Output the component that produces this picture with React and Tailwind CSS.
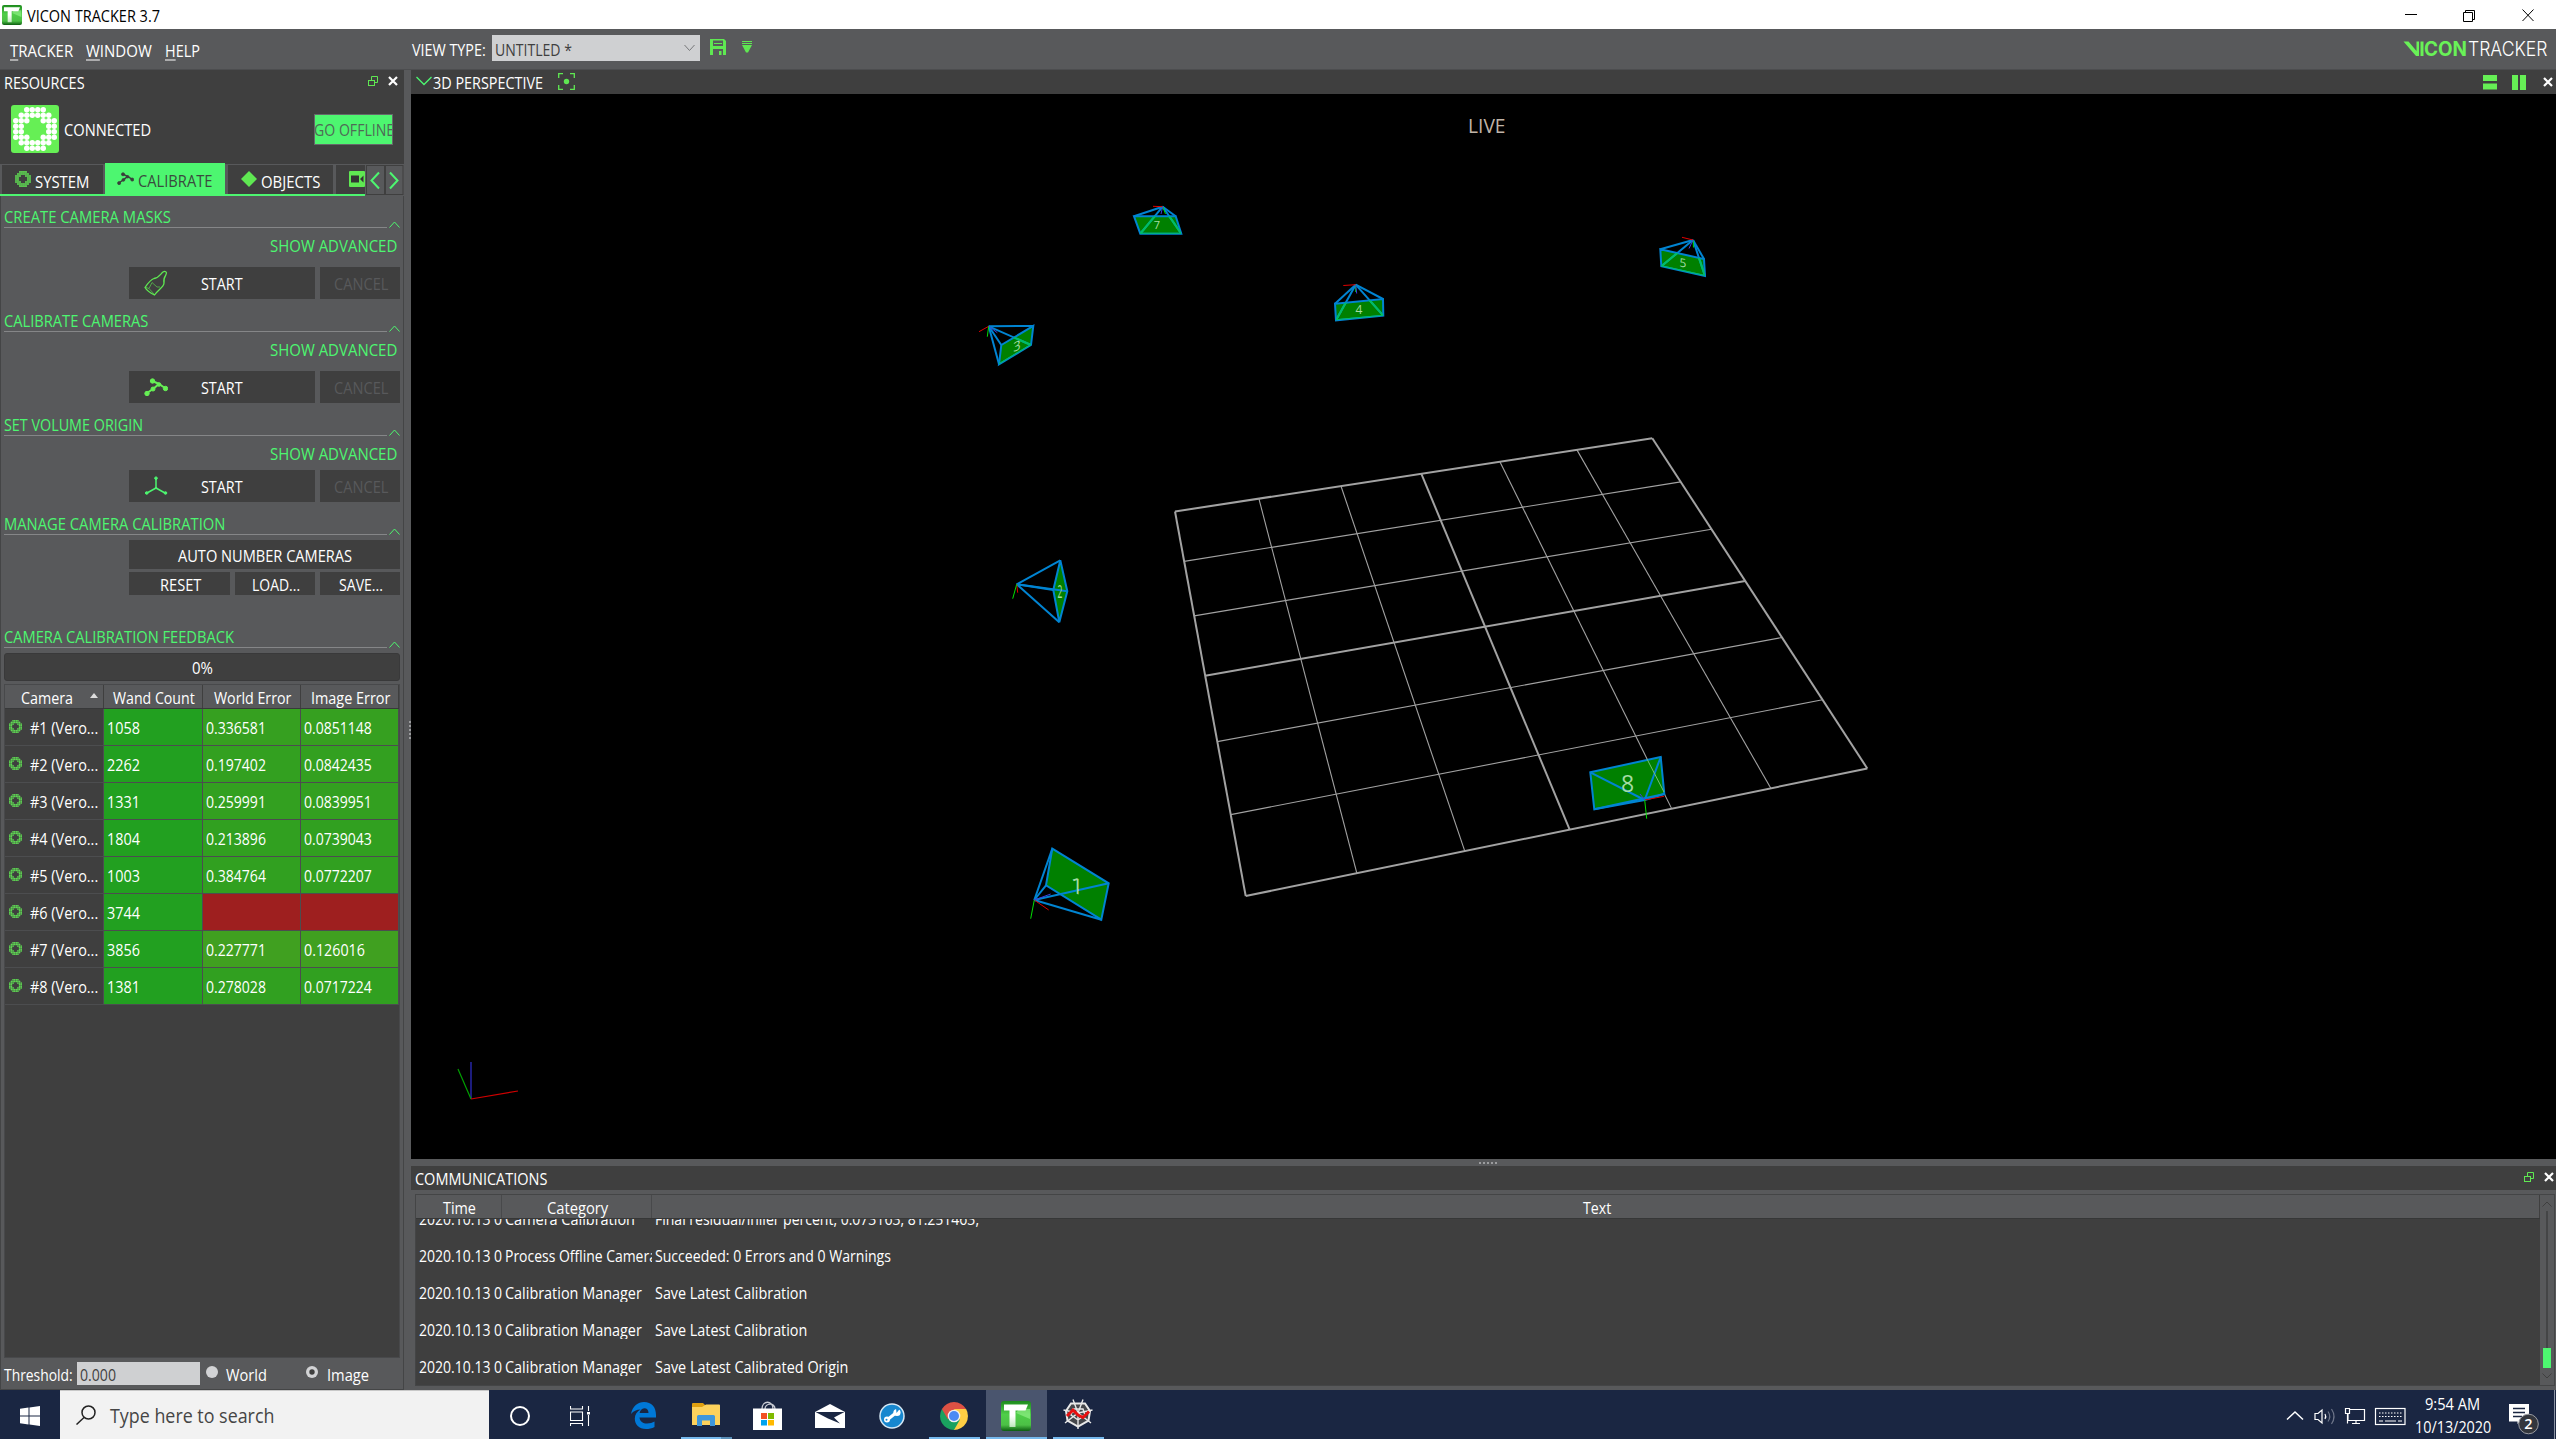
import React, { useLayoutEffect, useRef, useState } from "react";

/* Text run condensed horizontally so that its glyphs span w pixels. */
function T({ w, className = "", children }) {
  const ref = useRef(null);
  const [k, setK] = useState(null);
  useLayoutEffect(() => {
    if (!ref.current) return;
    setK((w + 1) / ref.current.offsetWidth);
  }, [w]);
  return (
    <span className={"inline-block shrink-0 whitespace-pre " + className} style={{ width: w + "px" }}>
      <span
        ref={ref}
        className="inline-block origin-left"
        style={k === null ? undefined : { transform: `translateY(0.5px) scaleX(${k})` }}
      >
        {children}
      </span>
    </span>
  );
}

const RING = [
  [2, 3, 4, 5],
  [1, 2, 3, 4, 5, 6],
  [0, 1, 2, 5, 6, 7],
  [0, 1, 6, 7],
  [0, 1, 6, 7],
  [0, 1, 2, 5, 6, 7],
  [1, 2, 3, 4, 5, 6],
  [2, 3, 4, 5],
];

function DotRing({ className, fill, r = 0.5 }) {
  return (
    <svg viewBox="0 0 8 8" className={className}>
      {RING.map((cols, y) =>
        cols.map((x) => <circle key={x + "-" + y} cx={x + 0.5} cy={y + 0.5} r={r} fill={fill} />)
      )}
    </svg>
  );
}

function TrackerLogo({ className }) {
  return (
    <svg viewBox="0 0 30 30" className={className}>
      <defs>
        <linearGradient id="tg" x1="0" y1="0" x2="0" y2="1">
          <stop offset="0" stopColor="#1d8a1d" />
          <stop offset="0.45" stopColor="#4fce49" />
          <stop offset="0.8" stopColor="#4cc046" />
          <stop offset="1" stopColor="#0c5c10" />
        </linearGradient>
        <linearGradient id="tw" x1="0" y1="0" x2="0" y2="1">
          <stop offset="0.5" stopColor="#fff" />
          <stop offset="1" stopColor="#fff" stopOpacity="0.65" />
        </linearGradient>
      </defs>
      <rect width="30" height="30" rx="3" fill="url(#tg)" />
      <path d="M15 12L29 18V8H18Z" fill="#9af58f" opacity="0.6" />
      <path d="M3 3.500H27L24.500 9.500H14.500V26H8.500V9.500H3Z" fill="url(#tw)" />
    </svg>
  );
}

function FloatIcon() {
  return (
    <svg viewBox="0 0 10 10" className="size-[10px] shrink-0" fill="none" stroke="#5fe852">
      <path d="M3.5 4V0.5H9.5V6.500H7" />
      <rect x="0.5" y="4.500" width="6" height="5" />
    </svg>
  );
}

function CloseIcon() {
  return (
    <svg viewBox="0 0 10 10" className="size-[10px] shrink-0" stroke="#fff" strokeWidth="2.2">
      <path d="M1 1L9 9M9 1L1 9" />
    </svg>
  );
}

function WandIcon({ className, color }) {
  return (
    <svg viewBox="0 0 24 18" className={className} fill={color} stroke={color}>
      <path d="M3 15L9 11L15 6L21 10M15 6L8.500 3" fill="none" strokeWidth="2" />
      <circle cx="3" cy="15.500" r="2.200" />
      <circle cx="9" cy="11" r="2" />
      <circle cx="15" cy="6.500" r="1.800" />
      <circle cx="21.500" cy="10.500" r="2.200" />
      <circle cx="8.500" cy="3" r="2.200" />
    </svg>
  );
}

function BrushIcon() {
  return (
    <svg viewBox="0 0 24 26" className="h-[26px] w-6" fill="none" stroke="#5fe852" strokeWidth="1.300">
      <path d="M19 2C21 0.500 23.500 2 22 4.500C20 8 19.500 9 20 13C20 17 14 20 10.500 25C6.500 23 2.500 20 1 17.500C4 13 6.500 9.500 10 8.500C15 8 16.500 4 19 2Z" />
      <path d="M1 17L5 18.500L8 12.500L13 17L16 17M5 18.500L10 24" strokeWidth="0.600" />
    </svg>
  );
}

function OriginIcon() {
  return (
    <svg viewBox="0 0 24 20" className="h-5 w-6" fill="#4df670" stroke="#4df670">
      <path d="M12 2V12L3 17M12 12L21 17" fill="none" strokeWidth="1.500" />
      <circle cx="12" cy="2.200" r="1.300" />
      <circle cx="2.700" cy="17" r="1.300" />
      <circle cx="21.500" cy="17" r="1.300" />
      <circle cx="12" cy="12" r="0.800" />
    </svg>
  );
}

function TitleBar() {
  return (
    <div className="flex h-[29px] items-center bg-white pl-0.5 text-black">
      <TrackerLogo className="mr-[5px] size-5" />
      <T w={132}>VICON TRACKER 3.7</T>
      <svg viewBox="0 0 130 14" className="mr-[22px] ml-auto h-[14px] w-[130px]" fill="none" stroke="#000">
        <path d="M1 6.500H13M59.500 4.500H68.500V13.500H59.500ZM61.500 4.500V2.500H70.500V11.500H68.500M118.500 1.500L129.500 13M129.500 1.500L118.500 13" />
      </svg>
    </div>
  );
}

function MenuBar() {
  return (
    <div className="flex h-[41px] items-center border-b border-[#4c4d4f] bg-[#58595b] pl-2.5">
      <T w={62} className="mt-0.5"><u className="underline underline-offset-[3px]">T</u>RACKER</T>
      <T w={65} className="mt-0.5 ml-[14px]"><u className="underline underline-offset-[3px]">W</u>INDOW</T>
      <T w={34} className="mt-0.5 ml-[14px]"><u className="underline underline-offset-[3px]">H</u>ELP</T>
      <T w={73} className="ml-[213px]">VIEW TYPE:</T>
      <div className="mb-0.5 ml-[7px] flex h-[26px] w-[208px] items-center justify-between bg-[#cfd0d2] pr-[5px] pl-[3px] text-[#3f3f3f]">
        <T w={76} className="mt-px">UNTITLED *</T>
        <svg viewBox="0 0 11 8" className="h-2 w-[11px]" fill="none" stroke="#77787a"><path d="M0.500 1L5.500 6.500L10.500 1" /></svg>
      </div>
      <svg viewBox="0 0 16 16" className="mb-1 ml-[10px] size-4">
        <path d="M0 0H14L16 2V16H0Z" fill="#5fe852" />
        <path d="M3 1.500H13V7H3ZM3 10H13V16H3Z" fill="#58595b" />
        <path d="M4 4.500H12M2 8.500H14" stroke="#5fe852" strokeWidth="1.200" />
        <rect x="9" y="12" width="2.500" height="4" fill="#5fe852" />
      </svg>
      <svg viewBox="0 0 10 12" className="mb-1 ml-4 h-3 w-2.5">
        <path d="M0 0.500H10M0 2.500H10" stroke="#5fe852" />
        <path d="M0 4H10L6 11.500H4Z" fill="#5fe852" />
      </svg>
      <svg viewBox="0 0 144 16" className="mr-[8px] mb-px ml-auto h-4 w-[144px] overflow-visible">
        <path d="M-0.500 0.500H4.500L12.500 10V0.500H15V15H12Z" fill="#69f257" />
        <rect x="16.500" y="0.500" width="3" height="14.500" fill="#69f257" />
        <text x="20" y="15" textLength="43" lengthAdjust="spacingAndGlyphs" fontFamily="Inter" fontSize="19.500" fontWeight="700" fill="#69f257">CON</text>
        <text x="64" y="15" textLength="79.500" lengthAdjust="spacingAndGlyphs" fontFamily="Inter" fontSize="19.500" fontWeight="300" fill="#fff">TRACKER</text>
      </svg>
    </div>
  );
}

function ResourcesHeader() {
  return (
    <div className="h-[94px] bg-[#3f3f3f]">
      <div className="flex h-[25px] items-center pb-px pl-1">
        <T w={80}>RESOURCES</T>
        <div className="mr-1.5 mb-0.5 ml-auto flex gap-2.5"><FloatIcon /><CloseIcon /></div>
      </div>
      <div className="mt-[10px] flex h-12 items-center pr-[11px] pl-[11px]">
        <div className="flex size-12 items-center justify-center rounded-[3px] bg-[#66ef55]">
          <DotRing className="size-11" fill="#fff" />
        </div>
        <T w={86} className="ml-[5px]">CONNECTED</T>
        <div className="ml-auto flex h-[31px] w-[79px] items-center justify-center overflow-hidden border border-[#66686a] bg-[#4df670] text-[#4f6a56]">
          <T w={79}>GO OFFLINE</T>
        </div>
      </div>
    </div>
  );
}

function Tabs() {
  return (
    <div className="relative flex h-8 items-stretch bg-[#58595b]">
      <div className="flex w-[365px] items-end border-b-2 border-[#4df670] pl-0.5">
        <div className="flex h-[29px] w-[101px] items-center bg-[#3f3f3f] pl-[13px]">
          <DotRing className="mb-0.5 size-4" fill="#5fd653" r={0.52} /><T w={53} className="mt-0.5 ml-1">SYSTEM</T>
        </div>
        <div className="ml-[2px] flex h-[31px] w-[120px] items-center bg-[#4df670] pl-[12px] text-[#3a4a3e]">
          <WandIcon className="h-[13px] w-[17px]" color="#3a3f3b" /><T w={73} className="mt-0.5 ml-1">CALIBRATE</T>
        </div>
        <div className="ml-[3px] flex h-[29px] w-[105px] items-center bg-[#3f3f3f] pl-[13px]">
          <svg viewBox="0 0 16 16" className="mb-0.5 size-4"><path d="M8 0L16 8L8 16L0 8Z" fill="#5fe852" /></svg>
          <T w={58} className="mt-0.5 ml-1">OBJECTS</T>
        </div>
        <div className="ml-[3px] flex h-[29px] flex-1 items-center justify-end bg-[#3f3f3f]">
          <svg viewBox="0 0 16 16" className="mb-0.5 size-4"><rect width="16" height="16" rx="1" fill="#5fe852" /><path d="M2 4.500H10V11.500H2ZM11 8L14.500 4.500V11.500Z" fill="#333" /></svg>
        </div>
      </div>
      <svg viewBox="0 0 39 32" className="h-8 w-[39px]" fill="none">
        <rect x="1.500" y="1.500" width="18" height="29" stroke="#3f3f3f" />
        <rect x="20.500" y="1.500" width="17.500" height="29" stroke="#3f3f3f" />
        <path d="M14 8.500L6.500 16.500L14 24.500M25 8.500L32.500 16.500L25 24.500" stroke="#4df670" strokeWidth="2" />
      </svg>
    </div>
  );
}

function Section({ title, w, className }) {
  return (
    <div className={"flex items-end " + className}>
      <div className="h-[23px] w-[383px] border-b border-[#858688] leading-[22px] text-[#4df670]"><T w={w}>{title}</T></div>
      <svg viewBox="0 0 11 7" className="ml-0.5 h-[7px] w-[11px]" fill="none" stroke="#4df670"><path d="M0.500 6.500L5.500 1L10.500 6.500" /></svg>
    </div>
  );
}

function Advanced({ className }) {
  return <div className={"flex justify-end pr-1 pb-0.5 leading-[18px] text-[#4df670] " + className}><T w={126}>SHOW ADVANCED</T></div>;
}

function StartRow({ icon, className }) {
  return (
    <div className={"flex justify-end gap-[5px] " + className}>
      <div className="flex h-8 w-[186px] items-center bg-[#3f3f3f] pl-[15px]">
        <div className="flex w-[57px]">{icon}</div>
        <T w={41}>START</T>
      </div>
      <div className="flex h-8 w-20 items-center justify-center bg-[#3f3f3f] text-[#58595b]"><T w={53}>CANCEL</T></div>
    </div>
  );
}

const G = "bg-[#22a020]";
const ROWS = [
  ["#1 (Vero...", "1058", "0.336581", "0.0851148", "bg-[#36a020]"],
  ["#2 (Vero...", "2262", "0.197402", "0.0842435", "bg-[#33a020]"],
  ["#3 (Vero...", "1331", "0.259991", "0.0839951", "bg-[#33a020]"],
  ["#4 (Vero...", "1804", "0.213896", "0.0739043", "bg-[#31a020]"],
  ["#5 (Vero...", "1003", "0.384764", "0.0772207", "bg-[#31a020]"],
  ["#6 (Vero...", "3744", "", "", "bg-[#9e1f1f]"],
  ["#7 (Vero...", "3856", "0.227771", "0.126016", "bg-[#40a020]"],
  ["#8 (Vero...", "1381", "0.278028", "0.0717224", "bg-[#31a020]"],
];

function CameraTable() {
  const cell = "flex h-[37px] items-center border-r border-b border-[#4c4d4f] pl-[3px] ";
  return (
    <div className="mt-[3px] h-[674px] w-[396px] border border-[#48494b] bg-[#3f3f3f]">
      <div className="grid h-6 grid-cols-[99px_99px_98px_98px] border-b border-[#38393a] bg-[#58595b]">
        <div className="flex items-center border-r border-[#3f3f3f] pl-4">
          <T w={51}>Camera</T>
          <svg viewBox="0 0 8 5" className="mb-0.5 ml-[18px] h-[5px] w-2"><path d="M0 5L4 0L8 5Z" fill="#ddd" /></svg>
        </div>
        <div className="flex items-center justify-center border-r border-[#3f3f3f]"><T w={81}>Wand Count</T></div>
        <div className="flex items-center justify-center border-r border-[#3f3f3f]"><T w={76}>World Error</T></div>
        <div className="flex items-center justify-center border-r border-[#3f3f3f]"><T w={78}>Image Error</T></div>
      </div>
      {ROWS.map(([n, a, b, c, bg]) => (
        <div key={n} className="grid grid-cols-[99px_99px_98px_98px]">
          <div className={cell}>
            <DotRing className="mb-0.5 ml-px size-[13px]" fill="#5fd653" r={0.52} /><T w={67} className="ml-2">{n}</T>
          </div>
          <div className={cell + G}><T w={32}>{a}</T></div>
          <div className={cell + bg}>{b && <T w={59}>{b}</T>}</div>
          <div className={cell + bg}>{c && <T w={c.length > 8 ? 67 : 60}>{c}</T>}</div>
        </div>
      ))}
    </div>
  );
}

function Radio({ on }) {
  return (
    <svg viewBox="0 0 14 14" className="size-[14px]"><circle cx="7" cy="7" r="6" fill="#d2d3d5" />{on && <circle cx="7" cy="7" r="2.700" fill="#3f3f3f" />}</svg>
  );
}

const BTN = "flex items-center justify-center bg-[#3f3f3f] ";

function LeftPanel() {
  return (
    <div className="flex w-[404px] flex-col">
      <ResourcesHeader />
      <Tabs />
      <div className="h-[1194px] border-x border-b border-[#444546] pt-[9px] pr-[3px] pl-[3px]">
        <Section title="CREATE CAMERA MASKS" w={166} />
        <Advanced className="mt-2" />
        <StartRow className="mt-[11px]" icon={<BrushIcon />} />
        <Section title="CALIBRATE CAMERAS" w={143} className="mt-2.5" />
        <Advanced className="mt-2" />
        <StartRow className="mt-[11px]" icon={<WandIcon className="h-[18px] w-6" color="#66ef55" />} />
        <Section title="SET VOLUME ORIGIN" w={138} className="mt-2.5" />
        <Advanced className="mt-2" />
        <StartRow className="mt-1.5" icon={<OriginIcon />} />
        <Section title="MANAGE CAMERA CALIBRATION" w={220} className="mt-[10px]" />
        <div className="mt-[5px] flex justify-end"><div className={BTN + "h-[29px] w-[271px]"}><T w={173}>AUTO NUMBER CAMERAS</T></div></div>
        <div className="mt-[3px] flex h-[23px] justify-end gap-[5px]">
          <div className={BTN + "w-[101px]"}><T w={40}>RESET</T></div>
          <div className={BTN + "w-20"}><T w={47}>LOAD...</T></div>
          <div className={BTN + "w-20"}><T w={43}>SAVE...</T></div>
        </div>
        <Section title="CAMERA CALIBRATION FEEDBACK" w={229} className="mt-[30px]" />
        <div className={BTN + "mt-[5px] h-7 w-[396px] rounded-[3px] border border-[#39393a]"}><T w={20}>0%</T></div>
        <CameraTable />
        <div className="flex h-[31px] items-center">
          <T w={68}>Threshold:</T>
          <div className="ml-[5px] flex h-[23px] w-[123px] items-center bg-[#cfd0d2] pl-[3px] text-[#3f3f3f]"><T w={35}>0.000</T></div>
          <div className="mb-1 ml-[5px]"><Radio /></div>
          <T w={40} className="ml-[7px]">World</T>
          <div className="mb-1 ml-[39px]"><Radio on /></div>
          <T w={41} className="ml-2">Image</T>
        </div>
      </div>
    </div>
  );
}

/* Projects the unit square onto the floor quad (tl, tr, br, bl). */
function projector([[x0, y0], [x1, y1], [x2, y2], [x3, y3]]) {
  const sx = x0 - x1 + x2 - x3, sy = y0 - y1 + y2 - y3;
  const dx1 = x1 - x2, dx2 = x3 - x2, dy1 = y1 - y2, dy2 = y3 - y2;
  const det = dx1 * dy2 - dx2 * dy1;
  const g = (sx * dy2 - dx2 * sy) / det, h = (dx1 * sy - sx * dy1) / det;
  return (u, v) => {
    const d = g * u + h * v + 1;
    return [
      ((x1 - x0 + g * x1) * u + (x3 - x0 + h * x3) * v + x0) / d,
      ((y1 - y0 + g * y1) * u + (y3 - y0 + h * y3) * v + y0) / d,
    ];
  };
}

const project = projector([[1175, 511.500], [1652.300, 438.300], [1867.300, 768.500], [1245.700, 896]]);
const STEPS = [0, 1, 2, 3, 4, 5, 6];

const CAMERAS = [
  { n: "7", apex: [1162.7, 206.7], q: [[1134, 216.3], [1175.7, 216.3], [1181.3, 233.7], [1140.3, 233.7]], red: [1153, 206.3], green: [1165.5, 214], vio: [1161, 214], t: [1157, 229, 11] },
  { n: "4", apex: [1355.7, 284.7], q: [[1335, 303.7], [1383, 299], [1383.3, 315.7], [1336, 320.3]], red: [1343.3, 285.5], green: [1355.7, 292], vio: [1356.7, 293.5], t: [1359, 314, 12] },
  { n: "3", apex: [988.7, 326.3], q: [[1001.3, 345], [1033.3, 326], [1031, 345], [999, 364.3]], red: [979, 331.7], green: [987.3, 336.7], vio: [997.3, 332.7], t: [1017, 350.5, 13], skew: -25 },
  { n: "5", apex: [1693, 240], q: [[1660.3, 249.3], [1704, 259], [1705, 276], [1661.3, 266.3]], red: [1682, 237.3], green: [1693.5, 247.5], vio: [1689, 248.5], t: [1683, 267, 12], skew: 10 },
  { n: "1", apex: [1034.3, 900], q: [[1052.3, 848.7], [1108.7, 883.3], [1101.3, 919.7], [1046, 885.3]], red: [1048.7, 910], green: [1030.7, 918.7], vio: [1050.7, 894], t: [1077, 894, 22], front: true, skew: 25 },
  { n: "8", apex: [1644.7, 800], q: [[1590.3, 772.3], [1660.7, 757], [1664.3, 794], [1594.3, 809.3]], red: [1664, 796.3], green: [1646.7, 818.7], vio: [1640, 794], t: [1627.5, 791.5, 23], front: true },
  { n: "2", apex: [1016.7, 584.3], q: [[1060.3, 560.3], [1067.3, 591.3], [1059.3, 622.3], [1053.3, 590]], red: [1017.7, 592.7], green: [1012.7, 598.7], t: [1060, 598, 19], narrow: true, front: true },
];

const pts = (a) => a.map((p) => p.join(",")).join(" ");

function Camera({ c }) {
  return (
    <g fill="none" strokeWidth="2" stroke="#0084d2">
      <polygon points={pts(c.q)} fill="#008000" />
      {c.q.map((p, i) => (
        <line key={i} x1={c.apex[0]} y1={c.apex[1]} x2={p[0]} y2={p[1]} />
      ))}
      {!c.front && (
        <>
          <clipPath id={"cam" + c.n}><polygon points={pts(c.q)} /></clipPath>
          <g clipPath={"url(#cam" + c.n + ")"} stroke="#00c064">
            {c.q.map((p, i) => i < 2 ? null : <line key={i} x1={c.apex[0]} y1={c.apex[1]} x2={p[0]} y2={p[1]} />)}
            <line x1={c.q[3][0]} y1={c.q[3][1]} x2={c.q[2][0]} y2={c.q[2][1]} />
          </g>
        </>
      )}
      <g strokeWidth="1">
        <line x1={c.apex[0]} y1={c.apex[1]} x2={c.red[0]} y2={c.red[1]} stroke="#e00000" />
        <line x1={c.apex[0]} y1={c.apex[1]} x2={c.green[0]} y2={c.green[1]} stroke="#00e000" />
        {c.vio && <line x1={c.apex[0]} y1={c.apex[1]} x2={c.vio[0]} y2={c.vio[1]} stroke="#4040e0" />}
      </g>
      <text
        transform={`translate(${c.t[0]} ${c.t[1]}) skewY(${c.skew || 0}) scale(${c.narrow ? 0.45 : 1} 1)`}
        fontSize={c.t[2]}
        fontWeight="400"
        fill="#a4dca4"
        stroke="none"
        textAnchor="middle"
        fontFamily="Open Sans"
      >
        {c.n}
      </text>
    </g>
  );
}

function Scene() {
  return (
    <svg viewBox="411 94 2145 1065" className="block h-[1065px] w-[2145px] bg-black">
      <text x="1468" y="133" textLength="37.500" lengthAdjust="spacingAndGlyphs" fontSize="20" fill="#c0b4a8" fontFamily="Open Sans">LIVE</text>
      <g stroke="#a2a2a2">
        {STEPS.map((i) => {
          const a = project(i / 6, 0), b = project(i / 6, 1), c = project(0, i / 6), d = project(1, i / 6);
          const sw = i % 3 === 0 ? 2 : 1.1;
          return (
            <g key={i} strokeWidth={sw}>
              <line x1={a[0]} y1={a[1]} x2={b[0]} y2={b[1]} />
              <line x1={c[0]} y1={c[1]} x2={d[0]} y2={d[1]} />
            </g>
          );
        })}
      </g>
      {CAMERAS.map((c) => <Camera key={c.n} c={c} />)}
      <line x1="1647" y1="759" x2="1664" y2="792" stroke="#74c074" />
      <g strokeWidth="1.200">
        <line x1="471" y1="1099" x2="471" y2="1062" stroke="#3030d0" />
        <line x1="471" y1="1099" x2="458" y2="1069" stroke="#00a000" />
        <line x1="471" y1="1099" x2="518" y2="1091" stroke="#d00000" />
      </g>
    </svg>
  );
}

function ViewHeader() {
  return (
    <div className="flex h-6 items-center bg-[#3f3f3f] pr-[3px] pl-[5px]">
      <svg viewBox="0 0 16 10" className="mb-0.5 h-2.5 w-4" fill="none" stroke="#4df670" strokeWidth="1.300"><path d="M0.500 1L8 8.500L15.500 1" /></svg>
      <T w={109} className="ml-px">3D PERSPECTIVE</T>
      <svg viewBox="0 0 17 17" className="mb-0.5 ml-[16px] size-[17px]" fill="none" stroke="#5fe852" strokeWidth="1.300">
        <path d="M0.700 5V0.700H5M12 0.700H16.300V5M16.300 12V16.300H12M5 16.300H0.700V12" /><circle cx="8.500" cy="8.500" r="2.700" fill="#5fe852" stroke="none" />
      </svg>
      <svg viewBox="0 0 43 15" className="mr-[17px] ml-auto h-[15px] w-[43px]" fill="#66ef55">
        <path d="M0 0H14V6H0ZM0 8.500H14V14.500H0ZM29 0H35V15H29ZM37 0H43V15H37Z" />
      </svg>
      <CloseIcon />
    </div>
  );
}

const LOG = [
  ["Camera Calibration", 129, "Final residual/inlier percent, 0.073163, 81.251463,", 323],
  ["Process Offline Camera", 151, "Succeeded: 0 Errors and 0 Warnings", 235],
  ["Calibration Manager", 136, "Save Latest Calibration", 151],
  ["Calibration Manager", 136, "Save Latest Calibration", 151],
  ["Calibration Manager", 136, "Save Latest Calibrated Origin", 192],
];

function Communications() {
  return (
    <div className="h-[224px]">
      <div className="flex h-6 items-center bg-[#3f3f3f] pr-0.5 pl-1">
        <T w={131}>COMMUNICATIONS</T>
        <div className="ml-auto flex gap-2.5 pb-0.5"><FloatIcon /><CloseIcon /></div>
      </div>
      <div className="mx-[1px] mt-1 ml-1 flex h-[192px] border border-[#444546] bg-[#3f3f3f]">
        <div className="flex flex-1 flex-col">
          <div className="grid h-6 shrink-0 grid-cols-[86px_150px_1fr] border-b border-[#363737] bg-[#58595b]">
            <div className="flex items-center justify-center border-r border-[#48494b] pt-px"><T w={32}>Time</T></div>
            <div className="flex items-center justify-center border-r border-[#48494b] pt-px"><T w={60}>Category</T></div>
            <div className="flex items-center justify-center border-r border-[#3f3f3f] pt-px pl-px"><T w={27}>Text</T></div>
          </div>
          <div className="flex h-[166px] flex-col justify-end overflow-hidden pb-px">
            {LOG.map((r, i) => (
              <div key={i} className="grid h-[37px] shrink-0 grid-cols-[86px_150px_1fr] items-center">
                <div className="overflow-hidden pl-[3px]"><T w={82} className="align-top">2020.10.13 0</T></div>
                <div className="overflow-hidden pl-[3px]"><T w={r[1]} className="align-top">{r[0]}</T></div>
                <div className="pl-[3px]"><T w={r[3]} className="align-top">{r[2]}</T></div>
              </div>
            ))}
          </div>
        </div>
        <div className="flex w-[14px] flex-col items-center bg-[#58595b] py-1.5">
          <svg viewBox="0 0 10 6" className="h-1.5 w-2.5" fill="none" stroke="#3f3f3f"><path d="M0.500 5.500L5 1L9.500 5.500" /></svg>
          <div className="mt-1 h-[137px] w-0.5 bg-[#444546]" />
          <div className="mb-auto h-5 w-2 bg-[#4df670]" />
          <svg viewBox="0 0 10 6" className="h-1.5 w-2.5" fill="none" stroke="#3f3f3f"><path d="M0.500 0.500L5 5L9.500 0.500" /></svg>
        </div>
      </div>
    </div>
  );
}

function TaskItem({ className = "", under = "", children }) {
  return <div className={"relative flex h-full items-center justify-center pt-0.5 " + className}>{children}{under && <div className={"absolute bottom-0 h-0.5 bg-[#76b9ed] " + under} />}</div>;
}

function Taskbar() {
  return (
    <div className="flex h-[49px] items-center bg-[#1a2642]">
      <TaskItem className="w-[60px]">
        <svg viewBox="0 0 20 20" className="size-5" fill="#fff"><path d="M0 2.800L8.500 1.600V9.500H0ZM9.500 1.500L20 0V9.500H9.500ZM0 10.500H8.500V18.400L0 17.200ZM9.500 10.500H20V20L9.500 18.500Z" /></svg>
      </TaskItem>
      <div className="flex h-full w-[429px] items-center border-t border-[#c8c8c8] bg-[#f2f2f2] pl-4 text-[19.5px] text-[#454545]">
        <svg viewBox="0 0 20 20" className="size-5" fill="none" stroke="#222" strokeWidth="1.500"><circle cx="12.500" cy="7.500" r="6.500" /><path d="M8 12.500L0.500 19.500" /></svg>
        <T w={163} className="ml-[14px]">Type here to search</T>
      </div>
      <TaskItem className="w-[61px]"><div className="size-5 rounded-full border-[2.5px] border-white" /></TaskItem>
      <TaskItem className="w-[61px] pr-px">
        <svg viewBox="0 0 20 20" className="size-5" fill="none" stroke="#fff" strokeWidth="1.100"><path d="M0.500 0V3H12.500V0M0.500 6H12.500V14.500H0.500ZM0.500 20V17.500H12.500V20M18.500 0V5M18.500 9V20" /><rect x="17" y="6" width="3" height="2.500" fill="#fff" stroke="none" /></svg>
      </TaskItem>
      <TaskItem className="w-[62px] pl-[3px]">
        <svg viewBox="0 0 25 27" className="h-[27px] w-[25px]"><path d="M0 12C1.500 4 7 0 13 0C20.500 0 25 5 25 13V15.500H8.500C9 19.500 12 21.500 16 21.500C19 21.500 21.500 20.800 23.500 19.500V25C21 26.500 18 27 15 27C8 27 3.800 22.500 3.800 16.500C3.800 12.500 6 9.500 9.500 7.500C5.500 7.700 2.500 9 0 12ZM8.600 11H17.500C17.500 8 16 6.300 13.300 6.300C10.800 6.300 9 8.500 8.600 11Z" fill="#0078d7" /></svg>
      </TaskItem>
      <TaskItem className="w-[62px] pl-1" under="left-[8px] w-10">
        <svg viewBox="0 0 28 23" className="mb-0.5 h-[23px] w-7"><path d="M0 1A1 1 0 0 1 1 0H11L13 2V5H0Z" fill="#e0a010" /><path d="M0 4H10L14 1.500H27A1 1 0 0 1 28 2.500V22H0Z" fill="#fdd25c" /><path d="M5 13.500A1.500 1.500 0 0 1 6.500 12H21.500A1.500 1.500 0 0 1 23 13.500V23H18V17.500H10V23H5Z" fill="#3f97db" /></svg>
        <div className="absolute bottom-0 left-12 h-0.5 w-[11px] bg-[#5a8fb8]" />
      </TaskItem>
      <TaskItem className="w-[64px] pl-px">
        <svg viewBox="0 0 29 29" className="size-[29px]"><path d="M9 8C9 -1 20 -1 20 8M12 8C12 2 22 1 22 8" fill="none" stroke="#c9ccd4" strokeWidth="1.300" /><rect y="7.500" width="29" height="21.500" fill="#fff" /><rect x="8" y="12" width="6" height="6" fill="#f25022" /><rect x="15" y="12" width="6" height="6" fill="#7fba00" /><rect x="8" y="19" width="6" height="5.500" fill="#00a4ef" /><rect x="15" y="19" width="6" height="5.500" fill="#ffb900" /></svg>
      </TaskItem>
      <TaskItem className="w-[62px]">
        <svg viewBox="0 0 30 24" className="h-6 w-[30px]"><path d="M0 8L15 0L30 8V24H0Z" fill="#fff" /><path d="M0.500 8L29.500 8L19 13.500L25 19.500L13 14.500Z" fill="#1a2642" /></svg>
      </TaskItem>
      <TaskItem className="w-[62px]">
        <svg viewBox="0 0 26 26" className="size-[26px]"><circle cx="13" cy="13" r="12" fill="#1787cf" stroke="#d6e8f5" strokeWidth="1.500" /><path d="M8 17L18 9" stroke="#fff" strokeWidth="3" /><circle cx="8" cy="16.500" r="3" fill="#fff" /><circle cx="18" cy="9.500" r="3.600" fill="#fff" /><path d="M17.500 10L21.500 5L17 5Z" fill="#1787cf" /><circle cx="7.500" cy="16.800" r="1" fill="#1787cf" /></svg>
      </TaskItem>
      <TaskItem className="w-[63px] pr-0.5" under="left-[6px] w-[51px]">
        <svg viewBox="0 0 28 28" className="size-7"><path d="M14 14L1.900 7A14 14 0 0 1 26.100 7Z" fill="#dd5144" /><path d="M14 14L26.100 7A14 14 0 0 1 14 28Z" fill="#ffce44" /><path d="M14 14V28A14 14 0 0 1 1.900 7Z" fill="#1aa15f" /><path d="M14 7H26.100L20 17.500Z" fill="#ffce44" /><path d="M1.900 7L8 17.500L14 7Z" fill="#dd5144" /><path d="M8 17.500L14 28L20 17.500Z" fill="#1aa15f" /><circle cx="14" cy="14" r="6.300" fill="#f1f1f1" /><circle cx="14" cy="14" r="5" fill="#4a8af4" /></svg>
      </TaskItem>
      <TaskItem className="w-[61px] bg-[#4a556e] pr-0.5" under="left-0 w-full"><TrackerLogo className="size-[30px]" /></TaskItem>
      <TaskItem className="w-[63px] pr-px" under="left-[6px] w-[51px]">
        <svg viewBox="0 0 30 30" className="mb-1 size-[30px]" fill="none" stroke="#e8e8e8" strokeWidth="1.400">
          <path d="M8 4.500L22 4.500L27 12L25.500 21.500L15 27.500L4.500 21.500L3 12Z" fill="#45474b" strokeWidth="2" />
          <path d="M10 0.500L15 14L20 0.500M0.500 11L15 14L29.500 11M2 24L15 14L28 24M15 14V30M10 10L20 10L22 16L15 21L8 16Z" />
          <path d="M4 17L10 11L15 16L20 18.500L26 12.500" stroke="#e81010" strokeWidth="3" />
        </svg>
      </TaskItem>
      <div className="ml-auto flex h-full items-center text-white">
        <svg viewBox="0 0 120 20" className="mt-0.5 h-5 w-[120px]" fill="none" stroke="#fff" strokeWidth="1.200">
          <path d="M1 13.500L9 6L17 13.500" strokeWidth="1.500" />
          <path d="M29 7.500H32L36 4V17L32 13.500H29Z" />
          <path d="M39 8Q40.500 10.500 39 13" /><path d="M42 5.500Q45.500 10.500 42 15.500M45.500 3Q50.500 10.500 45.500 18" stroke="#6d7589" />
          <path d="M64 3.500H78.500V14.500H62V8M66 17.500H74M70 14.500V17.500M59.500 2.500H63.500V7.500H59.500ZM61.500 7.500V17.500" />
          <rect x="89.500" y="2.500" width="29.500" height="16" />
          <path d="M93 7H116M93 10.500H116" strokeDasharray="1.500 1.500" /><path d="M93 15H97M99 15H110M112 15H116" />
        </svg>
        <div className="ml-[8px] flex w-[76px] flex-col items-center pt-px leading-[23px]"><T w={54}>9:54 AM</T><T w={75}>10/13/2020</T></div>
        <svg viewBox="0 0 32 32" className="mt-2.5 ml-[19px] h-8 w-8">
          <path d="M0 0H20V17.500H11L8.500 20V17.500H0Z" fill="#fff" />
          <path d="M4 4.500H16M4 8.500H16M4 12.500H13" stroke="#1a2642" strokeWidth="1.300" />
          <circle cx="19.500" cy="20" r="9.800" fill="#33363d" stroke="#9a9ca2" />
          <text x="19.500" y="25" textAnchor="middle" fontSize="14.500" fontWeight="600" fill="#fff" fontFamily="Open Sans">2</text>
        </svg>
        <div className="ml-[13px] h-full w-0.5 border-l border-[#8b93a3]" />
      </div>
    </div>
  );
}

export default function App() {
  return (
    <div className="flex h-[1439px] w-[2556px] flex-col overflow-hidden bg-[#58595b] font-['Open_Sans','Noto_Sans',sans-serif] text-[15.7px] leading-5 text-white">
      <TitleBar />
      <MenuBar />
      <div className="flex h-[1320px]">
        <LeftPanel />
        <div className="flex w-[7px] items-center justify-end">
          <div className="h-[18px] border-l-2 border-dotted border-[#9b9c9e]" />
        </div>
        <div className="flex w-[2145px] flex-col">
          <ViewHeader />
          <Scene />
          <div className="flex h-[7px] items-center justify-center pl-2"><div className="w-[18px] border-t-2 border-dotted border-[#9b9c9e]" /></div>
          <Communications />
        </div>
      </div>
      <Taskbar />
    </div>
  );
}
